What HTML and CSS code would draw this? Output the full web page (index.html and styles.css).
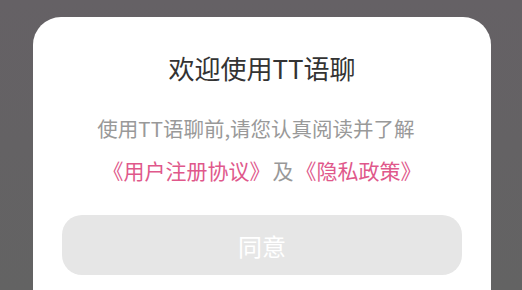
FILE: index.html
```html
<!DOCTYPE html>
<html lang="zh-CN">
<head>
    <meta charset="UTF-8">
    <meta name="viewport" content="width=device-width, initial-scale=1.0">
    <title>TT语聊</title>
    <link rel="stylesheet" href="styles.css">
</head>
<body>
    <div class="dialog">
        <h1 class="dialog-title">欢迎使用TT语聊</h1>
        <p class="dialog-text">使用TT语聊前,请您认真阅读并了解</p>
        <p class="dialog-links">
            <a href="#" class="link">《用户注册协议》</a><span class="and">及</span><a href="#" class="link">《隐私政策》</a>
        </p>
        <button class="agree-button" disabled>同意</button>
    </div>
</body>
</html>
```

FILE: styles.css
```css
body {
    margin: 0;
    height: 290px;
    overflow: hidden;
    background: linear-gradient(#656165, #636363);
    font-family: "Noto Sans CJK SC", "Noto Sans", sans-serif;
}

.dialog {
    margin: 17px 0 0 33px;
    width: 458px;
    height: 273px;
    background-color: #fff;
    border-radius: 28px 28px 0 0;
    box-sizing: border-box;
    padding: 33px 29px 0;
    display: flex;
    flex-direction: column;
    align-items: center;
}

.dialog-title {
    margin: 0;
    font-size: 26px;
    font-weight: normal;
    line-height: 36px;
    color: #333;
}

.dialog-text {
    margin: 28px 12px 0 0;
    font-size: 20.5px;
    line-height: 28px;
    color: #999;
}

.dialog-links {
    margin: 13px 0 0;
    font-size: 21px;
    line-height: 30px;
    color: #999;
}

.link {
    color: #e0588b;
    text-decoration: none;
}

.and {
    margin: 0 2px;
}

.agree-button {
    margin-top: 30px;
    width: 400px;
    height: 60px;
    flex-shrink: 0;
    border: none;
    border-radius: 20px;
    background-color: #e6e6e6;
    color: #fff;
    font-family: inherit;
    font-size: 24px;
}
```
